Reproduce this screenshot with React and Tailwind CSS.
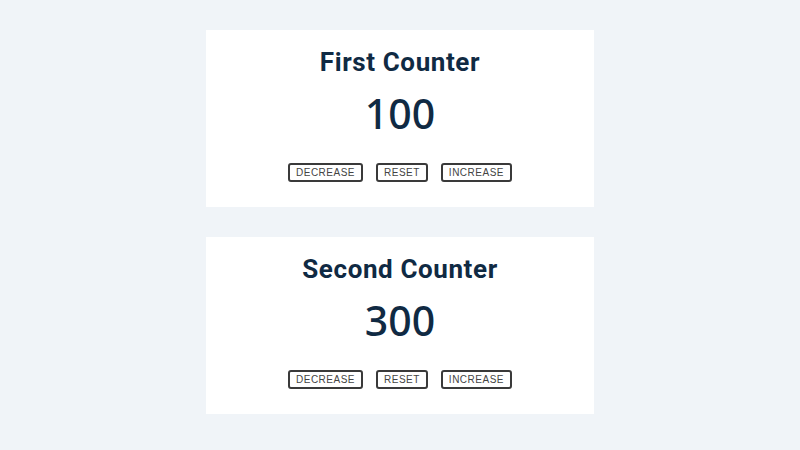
import React, { useState } from "react";

function Counter({ title, initial }) {
  const [count, setCount] = useState(initial);
  const btn =
    "border-2 border-[#3a3a3a] rounded-[3px] bg-white px-[6px] h-[19px] leading-[15px] text-[10px] tracking-[0.5px] text-[#444] font-['Liberation_Sans',Arial,sans-serif] uppercase";
  return (
    <div className="w-[388px] h-[177px] bg-white flex flex-col items-center pt-[17px]">
      <h2 className="font-['Roboto',sans-serif] font-bold text-[26px] leading-[30px] tracking-[0.6px] text-[#102a43]">
        {title}
      </h2>
      <div className="mt-[10px] font-['Noto_Sans','Open_Sans',sans-serif] font-medium text-[41px] leading-[52px] text-[#102a43]">
        {count}
      </div>
      <div className="mt-[24px] flex gap-[13px]">
        <button className={btn} onClick={() => setCount(count - 1)}>
          Decrease
        </button>
        <button className={btn} onClick={() => setCount(0)}>
          Reset
        </button>
        <button className={btn} onClick={() => setCount(count + 1)}>
          Increase
        </button>
      </div>
    </div>
  );
}

export default function App() {
  return (
    <div className="min-h-[450px] w-full bg-[#f0f4f8] flex flex-col items-center pt-[30px] gap-[30px]">
      <Counter title="First Counter" initial={100} />
      <Counter title="Second Counter" initial={300} />
    </div>
  );
}
